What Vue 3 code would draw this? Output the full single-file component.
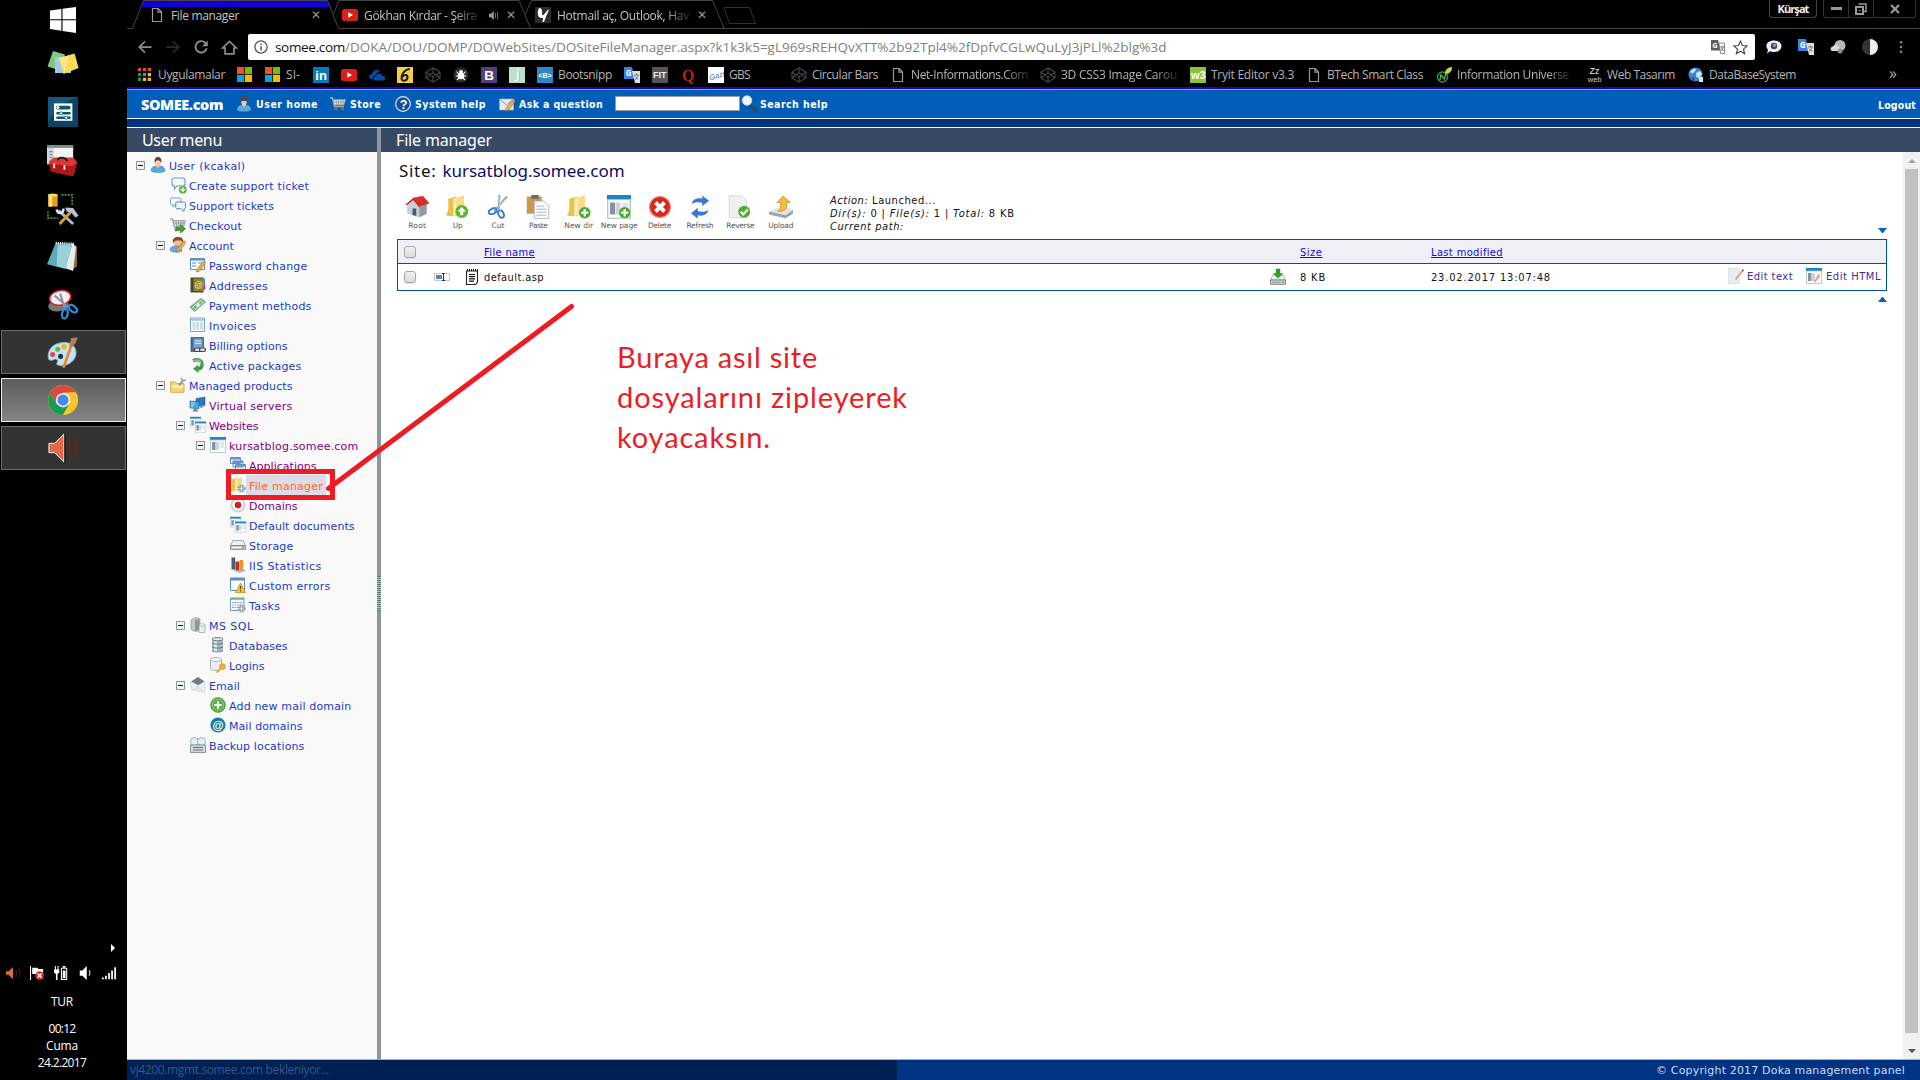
<script setup>
import { h } from 'vue'

/* Tunes letter-spacing so that a label takes the given width in pixels. */
const vFit = {
  mounted(el, { value }) {
    if (!value) return
    const natural = el.getBoundingClientRect().width
    el.style.letterSpacing = (value - natural) / el.textContent.length + 'px'
  },
}

const win = '<path fill="#1b86c4" d="M0 0h16v3H0z"/><path fill="#fff" stroke="#a9bccf" stroke-width=".8" d="M.5 3h15v12.5H.5z"/><path fill="#8293a6" d="M2 5h3.500v8H2z"/><path fill="#ccd3da" d="M6 5h3v8H6z"/><path fill="#e3e7eb" d="M10 5h4v6h-4z"/>'
const plus = '<circle cx="11.8" cy="11.8" r="4" fill="#45a82c" stroke="#d6efc9" stroke-width=".5"/><path stroke="#fff" stroke-width="1.5" d="M11.8 9.3v5M9.3 11.8h5"/>'
const folder = '<path fill="#e9c14d" d="M1.5 2.5 7 1v13H1.5L0 13.5l1.5-3z"/><path fill="#f8dd86" d="M5 2.5 12 0v12L5 14z"/><path fill="#fff0b5" d="m5 2.5 2-.7V13l-2 1z"/>'
const gear = '<circle cx="11.5" cy="11.5" r="3" fill="#eef1f4" stroke="#8f979e" stroke-width="2.2" stroke-dasharray="1.6 .8"/><circle cx="11.5" cy="11.5" r="1.4" fill="#fff" stroke="#8b9298" stroke-width=".8"/>'
const pencil = '<path fill="#f0ad42" stroke="#a96818" stroke-width=".6" d="m7 12.5 6-8 2.3 1.8-6 8L6.4 15z"/><path fill="#e9879a" d="m13 4.5 1-1.3 2.2 1.7-.9 1.4z"/>'
const person = '<path fill="#5aa7dc" stroke="#3b85bd" stroke-width=".5" d="M1 14c0-3 2-5 5-5h4c3 0 5 2 5 5-2 2-12 2-14 0z"/><path fill="#efc6a0" d="M5.2 5c0 3 1 5 2.8 6 1.8-1 2.8-3 2.8-6z"/><path fill="#6b3f2a" d="M4.8 6C4 1.5 6 0 8 0s4 1.5 3.2 6C10 4 9 3.5 7.5 3.5 6 3.5 5.5 5 4.8 6z"/>'
const cart = '<path fill="none" stroke="#aab0b5" stroke-width="1.3" d="M0 2h2.5l2 8.5H14"/><path fill="#e3e6e8" stroke="#8d9499" stroke-width=".8" d="M3 3.5h12.5L14 9H4.3z"/><path stroke="#83898e" stroke-width=".7" d="M6 3.5 6.6 9M8.5 3.5 8.8 9M11 3.5 11 9M13.4 3.5 12.8 9M3.5 6h11.3"/><circle cx="6" cy="13" r="1.4" fill="#777"/><circle cx="12.5" cy="13" r="1.4" fill="#777"/>'
const two = '<g transform="translate(0 -.2) scale(.68)">' + win + '</g><path fill="#f9f9f9" d="M4.500 3.800H16V16H4.500z"/><g transform="translate(5 4.500) scale(.7)">' + win + '</g>'
const gtr = (a, b) => `<path fill="${a}" d="M0 0h8l3 12H0z"/><path fill="${b}" d="M8 4h8v12h-5z"/><text x="1.8" y="8.6" font-size="8" font-weight="700" font-family="Open Sans,sans-serif" fill="#fff">G</text><path fill="none" stroke="#64707c" stroke-width=".9" d="M10 8h5M12.5 6.5V8m1.8 0c-.5 2-1.8 3.5-3.5 4.8M11.2 9.5l3 3.2"/>`
const yt = '<rect y="2" width="16" height="12" rx="2.5" fill="#d9201f"/><path fill="#fff" d="m6.3 5.2 4.7 2.8-4.7 2.8z"/>'
const codepen = '<g fill="none" stroke="#45484a" stroke-width="1.1"><path d="m8 .8 7 4.2v6l-7 4.2L1 11V5zM1 5l7 5 7-5M1 11l7-5 7 5M8 1v5M8 10v5"/></g>'
const page = '<path fill="none" stroke="#9a9a9a" stroke-width="1.2" d="M3.5 1.5h5.700l3.300 3.500v9.500h-9zM9 1.500v3.700h3.500"/>'
const ms = '<path fill="#f25022" d="M0 0h7.600v7.600H0z"/><path fill="#7fba00" d="M8.400 0H16v7.600H8.400z"/><path fill="#00a4ef" d="M0 8.400h7.600V16H0z"/><path fill="#ffb900" d="M8.400 8.400H16V16H8.400z"/>'
const txt = (bg, fg, t, s, x, y, extra = '') => `<path fill="${bg}" d="M0 0h16v16H0z"/><text x="${x}" y="${y}" font-size="${s}" fill="${fg}" font-family="Liberation Sans,sans-serif" ${extra}>${t}</text>`

const icons = {
  win, yt, codepen, page, ms, person, cart, websites: two,
  start: '<path fill="#fff" d="M0 2.200 7 1.200v6.300H0zM7.700 1.100 16 0v7.500H7.700zM0 8.200h7v6.400l-7-1zM7.700 8.200H16V16l-8.300-1.200z"/>',
  sticky: '<path fill="#7fc77a" d="m3 1.500 6 1.800-2.500 8L.3 9.200z"/><path fill="#9fcbf2" d="M4 4.500h8v8H4z"/><path fill="#f8dc56" d="m6 5 7.800-2.200 2 7.200L8.200 13z"/><path fill="#fff0a0" d="m6 5 5-1.400L9 12z" opacity=".6"/>',
  prefs: '<path fill="#0d4263" d="M0 0h16v16H0z"/><path fill="#17567b" d="M0 0h16C9 2 3 7 0 14z"/><path fill="#fff" d="M3.200 3.400h9.800v9.300H3.200z"/><g stroke="#0b5673" stroke-width="2" stroke-linecap="round"><path d="M5.200 5.600h5.800"/><path stroke-width="1.300" d="M5 8.700h6.500M5 11.100h6.500"/></g><circle cx="5.300" cy="5.600" r=".8" fill="#fff"/><circle cx="7" cy="8.700" r=".8" fill="#fff" stroke="#0b5673" stroke-width=".4"/><circle cx="9.700" cy="11.100" r=".8" fill="#fff" stroke="#0b5673" stroke-width=".4"/>',
  toolbox: '<path fill="#f3f3f3" d="M0 0h13.500v9H0z"/><path fill="#7d8894" d="M0 0h13.500v1.500H0z"/><path fill="#cfd6dc" d="M0 1.500h3.500V10H0z"/><path stroke="#6e7780" stroke-width=".5" d="M1 3.500h2M1.300 5h1.500M1.300 6.500h1.500"/><path fill="#df3833" d="m1 8.500 2.500-2h10L15.500 9l-2 7L2 13.500z"/><path fill="#b01716" d="m1 9.500 12 1.500 2.300-2L14 15l-2 1-10-2.400z"/><path fill="none" stroke="#222" stroke-width="1" d="M5.500 8C5.500 6 9.500 6 10.500 8.300"/><path fill="#ddd" d="M3.200 9.500h1v2.500h-1zM8.500 10.300h1v2.500h-1z"/>',
  dbtools: '<path fill="#e5a019" d="M.5 1h5v6h-5z"/><path fill="#fbe08d" d="M1 1h1.700v6H1z"/><ellipse cx="3" cy="1" rx="2.500" ry=".8" fill="#f9d873"/><path fill="none" stroke="#4f9440" stroke-width=".9" stroke-dasharray="1 .6" d="M7.500 1H13v5.500M.5 9.500V13h5"/><path stroke="#b0bccd" stroke-width="1.500" d="M6 9l7.500 7"/><path fill="none" stroke="#dfe6ef" stroke-width="1.300" d="M5 8.500c.5 2.500 3.500 2.500 3.500-.5"/><path stroke="#d99b33" stroke-width="1.500" d="M12.500 9.500 6.500 16"/><path fill="#b6c2d4" d="m9.500 7.500 4 .3 2.800 4-1.700.9-2-2.500-2.500-.7z"/>',
  notepad: '<path fill="#8d6a34" d="m13 2 2.500.8V13L13 15z"/><path fill="#e8edf0" d="m13 1 2 2-1.500 12.500-4-1.500z"/><path fill="#5fa9b8" d="M4.500 1 13 1.500 9.500 14.500 0 12z"/><path fill="#a9dae2" d="m5.500 2 7.300.2-3 12L5 13z" opacity=".8"/><path stroke="#eee" stroke-width="1.200" stroke-dasharray=".6 .5" d="M4.500 1 14 1.500"/>',
  snip: '<ellipse cx="5.500" cy="8.700" rx="5.500" ry="3.200" fill="#777" transform="rotate(-8 5.500 8.700)"/><ellipse cx="6.500" cy="4.700" rx="5.700" ry="3.900" fill="#f1f1f4" stroke="#d4232b" stroke-width=".8" transform="rotate(-12 6.500 4.700)"/><path stroke="#8c9299" stroke-width="1.100" d="m3.500 3.500 8 7M6.500 2.500l2.800 9"/><ellipse cx="9" cy="13.200" rx="1.500" ry="2.600" fill="none" stroke="#2b8fd8" stroke-width="1.200" transform="rotate(12 9 13.200)"/><ellipse cx="13.300" cy="10.500" rx="1.500" ry="2.600" fill="none" stroke="#2b8fd8" stroke-width="1.200" transform="rotate(-50 13.300 10.500)"/>',
  paint: '<path fill="#c5e2f5" stroke="#7fb1d6" stroke-width=".5" d="M9 2.800c4 0 6 2.500 6 5.500 0 3.500-3.500 6.500-7.500 6.500-.9 0-2.500-.3-2.500-.9s1-1.600.2-2.300c-1.200-.9-2.500 1-3.900.3C-.3 10.500.3 3 9 2.800z"/><circle cx="7" cy="10" r="1.300" fill="#1d3444"/><circle cx="2.900" cy="9" r="1.300" fill="#e3483d"/><circle cx="5.500" cy="6.300" r="1.300" fill="#57b847"/><circle cx="8.800" cy="5" r="1.400" fill="#f6b81c"/><path stroke="#e98a2a" stroke-width="1.400" stroke-linecap="round" d="M8.700 15.300 12.500 4.500"/><path fill="#b48252" d="m11.500 4.500 1-4L16 .2 14.800 3l-1.700 2.200z"/>',
  chrome: '<circle cx="8" cy="8" r="8" fill="#fbc52d"/><path fill="#dc4a3d" d="M1.100 4A8 8 0 0 1 14.900 4H8L4.500 10z"/><path fill="#179c57" d="M1.100 4A8 8 0 0 0 8 16l3.500-6-3.500 2-3.500-2z"/><path fill="#fbc52d" d="M14.900 4A8 8 0 0 1 8 16l3.500-6V4z"/><circle cx="8" cy="8" r="3.800" fill="#fff"/><circle cx="8" cy="8" r="3" fill="#4587f3"/>',
  horn: '<path fill="#e0694a" stroke="#fff" stroke-width=".5" d="M.5 5.500h3L8.500.500v15l-5-5h-3z"/><path fill="none" stroke="#000" stroke-width=".5" d="M9 0v16"/><path fill="none" stroke="#6b2514" stroke-width=".9" d="M11 4.500c1.500 2 1.500 5 0 7M13.500 2c2.700 3.500 2.700 8.500 0 12"/>',
  hornS: '<path fill="#e0694a" d="M0 6h3l5-5v14l-5-5H0z"/><path fill="none" stroke="#57200f" stroke-width="1" d="M11 4.500c1.500 2 1.500 5 0 7M14 2c2.500 3.500 2.500 8.500 0 12"/>',
  flag: '<path fill="#fff" d="M0 0h1.200v16H0zM2.500 2h6l1 1.500H15V9H2.500z"/><circle cx="11" cy="11" r="5" fill="#d3291c"/><path stroke="#fff" stroke-width="1.600" d="m8.700 8.700 4.600 4.600M13.300 8.700l-4.600 4.600"/>',
  battery: '<path fill="none" stroke="#fff" stroke-width="1.200" d="M8.500 2.500h6v13h-6z"/><path fill="#fff" d="M10 5h3.200v9H10zM10 0h3v2h-3zM0 4h6v3.500L4 9v7H2.200V9L0 7.500zM1 0h1.200v4H1zM4 0h1.200v4H4z"/>',
  vol: '<path fill="#fff" d="M2 5h3l5-5v16l-5-5H2z"/><path fill="none" stroke="#ddd" stroke-width="1.200" d="M12.500 5c1.500 1.500 1.500 4.500 0 6"/>',
  signal: '<path fill="#fff" d="M0 13h2v2H0zM3.500 11h2v4h-2zM7 8h2v7H7zM10.500 5h2v10h-2zM14 1.500h2V15h-2z"/>',
  back: '<path fill="none" stroke="#8c8c8c" stroke-width="2" d="M15.500 8H2M8 1.500 1.500 8 8 14.500"/>',
  fwd: '<path fill="none" stroke="#2b2b2b" stroke-width="2" d="M.5 8H14M8 1.500 14.500 8 8 14.500"/>',
  reload: '<path fill="none" stroke="#8c8c8c" stroke-width="2.200" d="M13.500 4A6.500 6.500 0 1 0 14.500 9.500"/><path fill="#8c8c8c" d="M15.800.500v6.700H9z"/>',
  home: '<path fill="none" stroke="#8c8c8c" stroke-width="1.800" d="M.8 8.500 8 1.500l7.200 7h-2.500v6.300H3.300V8.500z"/>',
  info: '<circle cx="8" cy="8" r="7" fill="none" stroke="#555" stroke-width="1.500"/><path stroke="#555" stroke-width="1.700" d="M8 7v5M8 4v1.700"/>',
  star: '<path fill="none" stroke="#4c4c4c" stroke-width="1.300" d="m8 1.200 2 4.700 5 .4-3.800 3.400 1.200 5L8 12l-4.400 2.700 1.200-5L1 6.300l5-.4z"/>',
  gtrG: '<path fill="#5c5c5c" d="M0 0h8l3 12H0z"/><path fill="#fff" stroke="#777" stroke-width="1" d="M9 3.500h6.500v12H11z"/><text x="1.500" y="9" font-size="8.500" font-weight="700" font-family="Open Sans,sans-serif" fill="#fff">G</text><path fill="none" stroke="#666" stroke-width="1" d="M10.500 8h4.500M12.500 6.500V8m1.800 0c-.5 2-1.800 3.500-3 4.500M11.500 9.500l3 3.200"/>',
  gtrB: gtr('#3f7fe8', '#dbe0e4'),
  bubble: '<path fill="#f2f2f5" d="M8 1.500c4 0 7.500 2.300 7.500 5.700S12 13 8 13c-1.500 0-3-.3-4-.8L1 14.500l1-3.800C-2 6 2 1.500 8 1.500z"/><circle cx="8" cy="7" r="3.200" fill="#34456f"/><circle cx="8.500" cy="6.300" r="1.700" fill="#b98e8b"/>',
  weather: '<circle cx="10" cy="6.500" r="5.500" fill="#b9b9b9"/><path fill="#d9d9d9" d="M2 12c-2-1-2-4 1-4.500C4 5 8 5 8.500 8c3 0 3 4 0 4z"/><circle cx="10" cy="12" r="2.500" fill="#8d8d8d"/>',
  half: '<path fill="#333" d="M8 0a8 8 0 0 0 0 16z"/><path fill="#eee" d="M8 0a8 8 0 0 1 0 16z"/>',
  dots: '<circle cx="8" cy="2.500" r="1.500" fill="#858585"/><circle cx="8" cy="8" r="1.500" fill="#858585"/><circle cx="8" cy="13.500" r="1.500" fill="#858585"/>',
  apps: '<path fill="#dd4b3e" d="M0 0h4v4H0zM6 0h4v4H6zM12 0h4v4h-4z"/><path fill="#1a9b5a" d="M0 6h4v4H0zM0 12h4v4H0z"/><path fill="#4285f4" d="M6 6h4v4H6z"/><path fill="#f4b91c" d="M12 6h4v4h-4zM6 12h4v4H6zM12 12h4v4h-4z"/>',
  inn: txt('#0b78b5', '#fff', 'in', 13, 2.3, 12.7, 'font-weight="700"'),
  drive: '<path fill="#0b4ba3" d="M2 12c-3-1-2-5 1-5 1-4 6-5.500 8.500-2.500-3 0-4.500 2-5 4-2 0-3 1.500-2.500 3.500z"/><path fill="#0b4ba3" d="M6 13.500c-2.500-.5-2-4 .6-4 .5-4 6-4 6.700-.8 3.700 0 3.700 4.500.7 4.800z"/>',
  six: '<path fill="#f6cf46" d="M0 0h16v16H0z"/><path fill="none" stroke="#1d1d1d" stroke-width="2" stroke-linecap="round" d="M12 2C7.500 2.500 4 8 4.500 11.500c.6 3.500 5.500 2.500 6-1 .3-3-3.500-3.500-5.300-.5"/>',
  bug: '<circle cx="8" cy="8" r="7.500" fill="#2b2c2d"/><circle cx="8" cy="9" r="3.300" fill="#fff"/><circle cx="8" cy="5" r="2" fill="#fff"/><path stroke="#fff" stroke-width="1.100" d="M3.500 4.500 6 7.500M12.500 4.500 10 7.500M2.800 9h10.400M4 13l3-3M12 13l-3-3"/>',
  bb: txt('#563d7c', '#fff', 'B', 13.5, 3.2, 12.8, 'font-weight="700"'),
  jj: '<path fill="#bfe0cc" d="M0 0h16v16H0z"/><path fill="none" stroke="#fff" stroke-width="1.600" d="M9 4.500v7.500c0 2-1.500 2.500-3.500 2M9 1.500v1.500"/><path fill="none" stroke="#79a98c" stroke-width=".5" d="M10.200 4.500V12c0 2.500-2 3.500-4.500 3"/>',
  snipp: txt('#2f87c5', '#fff', '&lt;B&gt;', 7, 1.3, 10.500, 'font-weight="700"'),
  fit: txt('#555', '#eee', 'FIT', 9, .9, 11.400, 'font-weight="700"'),
  qq: '<text x="2" y="13.500" font-size="16" font-weight="700" font-family="Liberation Serif,serif" fill="#b7260f">Q</text>',
  gazi: txt('#fff', '#3b6fb5', 'Gazi', 7.5, .8, 11.5, 'font-style="italic" transform="rotate(-18 8 8)"'),
  w3: txt('#8ac43f', '#fff', 'w3', 11, .9, 12, 'font-weight="700"'),
  leaf: '<circle cx="6.500" cy="10" r="5" fill="none" stroke="#2a9b3b" stroke-width="1.500"/><path fill="none" stroke="#4fc04a" stroke-width="1.300" d="m4 13 .8-5 3.500 4L10 6"/><path fill="#c6dc3d" d="M9 7c0-4 2-6.500 7-7 0 4-2 7-7 7z"/>',
  zz: '<text x="2.500" y="7" font-size="9" font-family="Liberation Sans,sans-serif" fill="#eee">Zz</text><text x=".8" y="15.300" font-size="7.500" font-family="Liberation Sans,sans-serif" fill="#ccc">web</text>',
  globe: '<circle cx="7.500" cy="7.500" r="7" fill="#3e87cf"/><path fill="#cfe6f7" d="M2 5c2-3 4-3.500 6-3l-1.500 3L4 6.500zM8 6l4-2 2 3-3 4-2.500-1z"/><path fill="#1d5a9e" d="M3 10l3 0 1 4c-2 0-3.500-2-4-4z"/><path fill="#e2e8ee" d="M11 10h4v5h-4z"/>',
  hot: '<path fill="#2b2d31" d="M0 0h16v16H0z"/><path fill="#fff" d="M4.500 1c2.500 0 3 3 2.500 6.500 1 1 1.500 1 2 0L13 2.500l.8 1L11 9.500 9 15H7.500L8 11c-3 0-4.500-.5-5-3-.5-3 0-6.500 1.500-7z"/>',
  sound: '<path fill="#999" d="M0 5.500h3l4-4v13l-4-4H0z"/><path fill="none" stroke="#777" stroke-width="1.300" d="M9.500 4v8M12.500 2.500v11"/>',
  help: '<circle cx="8" cy="8" r="7.300" fill="#134e9b" stroke="#dce8f6" stroke-width="1.200"/><text x="4.700" y="12.500" font-size="12.500" font-weight="700" font-family="Liberation Sans,sans-serif" fill="#fff">?</text>',
  ask: '<path fill="#e6edf5" stroke="#9eb4cc" stroke-width=".6" d="M.5 3h14v11H.5z"/><path fill="none" stroke="#8095ae" d="m.5 3 7 6 7-6"/>' + pencil,
  search: '<path stroke="#3a4450" stroke-width="2.200" stroke-linecap="round" d="m8.500 9.500 6.500 6.300"/><circle cx="5" cy="4.500" r="4.800" fill="#eef4fb" stroke="#ccd5de" stroke-width=".8"/>',
  chatAdd: '<path fill="#f4f8fc" stroke="#6f96c4" stroke-width="1.100" d="M4 1h9c1.500 0 2 1 2 2v4c0 1.500-1 2-2 2H7l-2.500 3V9C3 9 2 8 2 7V3c0-1 .8-2 2-2z"/><g transform="translate(1 1)">' + plus + '</g>',
  chats: '<path fill="#f4f8fc" stroke="#7b9dc8" stroke-width="1" d="M1.500 1h8c1 0 1.300.6 1.300 1.300v4c0 1-.6 1.400-1.300 1.400H5L3 10V7.700H1.500C.8 7.700.5 7 .5 6.500v-4C.5 1.500.8 1 1.500 1z"/><path fill="#eaf2fa" stroke="#5d87bb" stroke-width="1" d="M7 5h7c1 0 1.500.6 1.500 1.300v4c0 1-.6 1.400-1.300 1.400L14 14.500l-3-2.800H7c-1 0-1.300-.6-1.300-1.400v-4C5.700 5.500 6.300 5 7 5z"/>',
  checkout: cart + '<path fill="#4f9d35" stroke="#2e7519" stroke-width=".6" d="M6 10h4.500V7.500l5 4.300-5 4.200v-2.500H6z"/>',
  account: '<circle cx="8" cy="5.500" r="4.500" fill="#f0c08f"/><path fill="#8a4b1e" d="M3 6C2 1 5 0 8 0s6 1 5 6l-2-2.500H5.500z"/><path fill="#6fa4df" stroke="#3d74b5" stroke-width=".5" d="M0 13c0-2.500 2-4 5-4h5l2 5c-4 2-11 1.500-12-1z"/>' + pencil,
  password: '<path fill="#f7fafd" stroke="#5f8fc5" d="M.5 1.500h14v11H.5z"/><path fill="#5f8fc5" d="M.5 1.500h14v2H.5zM2 5.500h4v1H2zM2 8.500h4v1H2zM8 5.500h5v1H8z"/>' + pencil,
  book: '<path fill="#4c4a26" d="M.5.500h13v15H.5z"/><path fill="#8c8230" d="M3.500 1.500h9.500v12.500H3.500z"/><text x="4.300" y="11" font-size="8.500" font-family="Liberation Sans,sans-serif" fill="#f0e6a8">@</text><path fill="#159ad6" d="M13.500 1.500H15v5h-1.500z"/><path fill="#e51f8b" d="M13.500 6.500H15V13h-1.500z"/>',
  money: '<path fill="#7bb98a" stroke="#4d9461" stroke-width=".7" d="m0 10 11-8.500L15.500 5 4.500 14.500z"/><path fill="none" stroke="#d5ecd9" stroke-width=".8" d="m2.500 10 8.500-6.500 2.500 1.800-8.500 7.200z"/><circle cx="8" cy="8" r="2" fill="#d5ecd9"/>',
  invoice: '<path fill="#fff" stroke="#7a9fd2" d="M.5 1h14v13.500H.5z"/><path fill="#a9c3e6" d="M1 1.500h13v2.300H1z"/><path stroke="#8fb0db" stroke-width=".9" d="M2.500 6h10.500M2.500 8h10.500M2.500 10h10.500M2.500 12h10.500"/><path stroke="#fff" d="M5.500 5v8M9.500 5v8"/>',
  billing: '<path fill="#3f6da0" stroke="#274d78" stroke-width=".7" d="M1 .5h12.500v14H1z"/><path fill="#7ea4cc" d="M3.500 1.500h9v10h-9z"/><path stroke="#dbe7f3" d="M5 4h6M5 6.500h6"/><g fill="#ddd" stroke="#444" stroke-width="1.200"><rect x="4.500" y="11" width="6" height="3.500" rx="1.700"/><rect x="9.500" y="11" width="6" height="3.500" rx="1.700"/></g>',
  recycle: '<path fill="none" stroke="#429a4a" stroke-width="3.400" d="M3 3.700C7 1.700 12 3 12 7.500c0 3-2 4.500-4.500 4.500"/><path fill="#429a4a" d="M8.500 7.500V16L3 11.700z"/><path fill="none" stroke="#a2d5a2" stroke-width="1.200" d="M3.500 3.700c3.500-1.500 7.500-.5 7.700 3.500"/>',
  managed: '<path fill="#f7d577" stroke="#d3a02e" stroke-width=".8" d="M.5 5h5l1 1.500h7.500v8.800H.5z"/><path fill="#fdf4d3" d="M2 8.500h11v2H2z"/><path stroke="#8b949b" stroke-width="2" d="m9 8.500 4-5"/><path fill="none" stroke="#8b949b" stroke-width="1.500" d="M11.500.800c-.5 2 1.500 3.500 4 2.200"/>',
  servers: '<path fill="#2b7ab9" stroke="#1b588c" stroke-width=".5" d="m6 1.500 9-1.500v8.500l-9 .5z"/><path fill="#4da2dd" stroke="#1b588c" stroke-width=".6" d="m0 4 9 .800v7L0 11z"/><path fill="#82c4ee" d="m1 5 4 .300L3 10.500l-2-.2z"/><path fill="#777f87" d="M4 12h2.500l2 2.500H2.500zM10 9h2l2 1.500h-4z"/>',
  applications: '<g fill="#e7eff8" stroke="#5884bd" stroke-width=".9"><path d="M.5.500h10v6H.5zM3 4h10v6H3zM5.500 7.500h10v6h-10z"/></g><path fill="#6793ca" d="M.5.500h10v2H.5zM3 4h10v2H3zM5.500 7.500h10v2h-10z"/>',
  fileman: folder + gear,
  domain: '<circle cx="8" cy="8" r="7.500" fill="#ccd4db"/><circle cx="8" cy="8" r="5.500" fill="#f3f5f7"/><circle cx="8" cy="8" r="3.200" fill="#c8261b"/>',
  storage: '<path fill="#eceeef" stroke="#83888c" stroke-width=".7" d="M3 3.500h10l2.500 5h-15z"/><path fill="#c3c7ca" stroke="#75797c" stroke-width=".7" d="M.5 8.500h15v4H.5z"/><path stroke="#fff" d="M2 10.500h9"/><circle cx="13.300" cy="10.500" r=".9" fill="#45b53a"/>',
  stats: '<path fill="#3f617c" d="M1.500.500h3.700v12H1.500z"/><path fill="#c52b1c" d="M5.500 4.500h3.700V14H5.500z"/><path fill="#ec9430" d="M9.500 3h3.700v11H9.500z"/><path fill="#adb5bc" d="m0 12 5 1.500 10-1 .5 1.500-6 2z"/>',
  errors: '<path fill="#fafcff" stroke="#5d8bc9" d="M.5 1h14v12.500H.5z"/><path fill="#5d8bc9" d="M.5 1h14v2.500H.5z"/><path fill="#f7c638" stroke="#b98212" stroke-width=".7" d="m10.500 6 5 9.500h-10z"/><path stroke="#5c3c00" stroke-width="1.200" d="M10.500 9v3.300M10.500 13.200v1.200"/>',
  tasks: '<path fill="#fff" stroke="#6b97cb" d="M.5 1h13.500v12.500H.5z"/><path fill="#83b07d" d="M.5 1h13.500v1.800H.5z"/><path stroke="#7ba2d2" stroke-width="1" stroke-dasharray="1.800 .7" d="M2 5.500h10.500M2 8h10.500M2 10.500h10.500"/>' + gear,
  mssql: '<path fill="#c4c8cb" stroke="#898e92" stroke-width=".6" d="m1 3 4-2.500 5 1v12l-5 1-4-2z"/><path fill="#8f9598" d="m5 3 4.500-.8v10.500L5 14z"/><path stroke="#5cbf51" stroke-width="1.200" d="M6.500 6.500h2"/><path fill="#eceeef" stroke="#8b9094" stroke-width=".6" d="M9 8h6v7.500H9z"/><ellipse cx="12" cy="8" rx="3" ry="1.200" fill="#fff" stroke="#8b9094" stroke-width=".6"/>',
  db: '<path fill="#a9b8c1" d="M2 2h11v12H2z"/><path fill="#e4ebee" d="M4 2h3v12H4z"/><g stroke="#566c79" stroke-width=".9"><ellipse cx="7.500" cy="2.200" rx="5.500" ry="1.700" fill="#dce5e9"/><path fill="none" d="M2 6c2 1.500 9 1.500 11 0M2 10c2 1.500 9 1.500 11 0M2 13.700c2 1.600 9 1.600 11 0"/></g>',
  logins: '<path fill="#eceeef" stroke="#92989c" stroke-width=".7" d="M.5 2.500v9.500c2 2 9 2 11 0V2.500z"/><ellipse cx="6" cy="2.500" rx="5.500" ry="2" fill="#fafafa" stroke="#92989c" stroke-width=".7"/><circle cx="12.500" cy="9.500" r="2.800" fill="#f2b343" stroke="#b8791b" stroke-width=".6"/><path stroke="#eaa52f" stroke-width="2" d="m10.800 11.500-4 4"/>',
  email: '<path fill="#717a81" d="m8 0 6.500 4.500-6 4L1 4.500z"/><path fill="#eef0f2" stroke="#c3c8cc" stroke-width=".6" d="m.5 4.500 7.500 4 7-4-.5 10.500L1.500 13z"/><path fill="#dfe3e6" d="m8 8.500 6.500 6.500L1.500 13z"/>',
  addG: '<circle cx="8" cy="8" r="7.300" fill="#56ae44" stroke="#37872a" stroke-width=".8"/><circle cx="8" cy="8" r="5.800" fill="none" stroke="#b5dfa9" stroke-width=".6"/><path stroke="#fff" stroke-width="2.200" d="M8 4.300v7.400M4.300 8h7.400"/>',
  at: '<circle cx="8" cy="8" r="7.600" fill="#12809f"/><text x="2.300" y="12" font-size="11.500" font-style="italic" font-weight="700" font-family="Liberation Sans,sans-serif" fill="#fff">@</text>',
  backup: '<g fill="#e4f0f6" stroke="#7fa9c0" stroke-width=".8"><circle cx="4.500" cy="4.500" r="4"/><circle cx="11.500" cy="4.500" r="4"/></g><path fill="#d4d7d9" stroke="#6d7276" stroke-width=".7" d="M.5 8h15v7.500H.5z"/><path stroke="#6d7276" stroke-width="1.200" d="M3 10.500h10M3 13h10"/>',
  root: '<path fill="#c8ced4" d="m1.500 7 4-4 4 5v7l-8-2.500z"/><path fill="#8f9aa6" d="m9.500 8 5-2v6.500l-5 2.500z"/><path fill="#d92d25" stroke="#a31812" stroke-width=".3" d="M5.500 2 12 .800l4 4.700-6 2z"/><path fill="#b3221b" d="M5.500 2 .3 6.500l1 .4L5.500 3.300l4 5 .6-.8z"/><path fill="#4d5b69" d="M5 9h2.500v5L5 13.300z"/>',
  up: folder + '<circle cx="10.500" cy="11" r="4.300" fill="#58b92a"/><path fill="#fff" d="m10.500 8 2.800 3h-1.800v2.500h-2V11H7.700z"/>',
  cut: '<path stroke="#8d9dac" stroke-width="1.300" d="m9 0-.5 9.500M14 1 5.500 11"/><path stroke="#dfe6ec" stroke-width=".5" d="m9.300 1-.4 7M13.500 2.200 6 10.500"/><ellipse cx="4.500" cy="10.800" rx="2.800" ry="1.700" fill="none" stroke="#3f7ed4" stroke-width="1.300" transform="rotate(-25 4.500 10.800)"/><ellipse cx="10" cy="12.700" rx="1.700" ry="2.600" fill="none" stroke="#3f7ed4" stroke-width="1.300" transform="rotate(-25 10 12.700)"/>',
  paste: '<path fill="#c99a4c" d="M.5 1h10v11.500H.5z"/><path fill="#6b6b6b" d="M3.500 0h5v2.500h-5z"/><path fill="#f7f9fb" stroke="#a3abb3" stroke-width=".5" d="M5.500 4h6.500l3.200 3v8.700H5.500z"/><path stroke="#a9b8c8" stroke-width=".6" d="M7 7.500h5M7 9.500h6.500M7 11.500h6.500M7 13.500h6.500"/>',
  newdir: folder + plus, newpage: win + plus,
  del: '<circle cx="8" cy="8" r="7" fill="#d8281c" stroke="#e98c83" stroke-width=".8"/><path stroke="#fff" stroke-width="2.600" d="m5 5 6 6M11 5l-6 6"/>',
  refresh: '<path fill="#3c78d2" d="M2.500 6C3 3 6 1.500 9.500 2.500V.300L14 3.800 9.500 7.500V5.300C7 4.500 4.500 4.700 2.500 6z"/><path fill="#3c78d2" d="M13.500 10c-.5 3-3.500 4.500-7 3.500v2.300L2 12.200l4.500-3.700v2.200c2.500.8 5 .6 7-.7z"/>',
  reverse: '<path fill="#eef0f2" stroke="#ccd0d3" stroke-width=".5" d="M.800.500h8.500l3 3v11.500H.800z"/><circle cx="10.800" cy="11.200" r="4" fill="#4cae31"/><path fill="none" stroke="#fff" stroke-width="1.400" d="m8.500 11.200 1.700 1.800 3-3.300"/>',
  upload: '<path fill="#e0e3e6" d="m0 11 5-2.500h8l3 1.700-5 3.300z"/><path fill="#9aa1a7" d="m0 11 11 2.500v2L0 13zM11 13.500l5-3.300v2.300l-5 3z"/><path fill="#f4bb42" stroke="#c98c1b" stroke-width=".5" d="m9.500.700 4.700 4.300h-2.500v3.500c-1 2-3 2.500-6 2.300 1.500-.5 2-1.500 2-3V5H5.300z"/>',
  rename: '<path fill="#fff" stroke="#c0c0c0" stroke-width=".9" d="M.500 4.500h15v7H.5z"/><path fill="#5b82c4" d="M2 6h6v4H2z"/><path fill="none" stroke="#333" stroke-width="1" d="M8 4.500h3M8 11.500h3M9.500 4.500v7"/>',
  doc: '<path fill="#fff" stroke="#222" stroke-width="1.100" d="M2.500 2h11v11l-2 2.500h-9z"/><path stroke="#111" stroke-width="2" stroke-dasharray="1 1" d="M3 1h11"/><path stroke="#111" stroke-width="1.200" d="M5 5.500h6M5 7.700h6M5 9.900h6M5 12.100h5"/>',
  download: '<path fill="#eef0f1" stroke="#9a9fa3" stroke-width=".7" d="M3 6h10l2.500 5H.5z"/><path fill="#d5d8da" stroke="#666b6f" stroke-width=".8" d="M.5 11h15v4.300H.5z"/><path stroke="#777" stroke-width=".8" d="M2 13.200h9"/><circle cx="13" cy="13.200" r=".9" fill="#3db42e"/><path fill="#2fa32a" stroke="#197316" stroke-width=".4" d="M6 0h4v4.500h2.700L8 9.300 3.300 4.500H6z"/>',
  etext: '<path fill="#eaedef" stroke="#d3d7da" stroke-width=".6" d="M.5.500h11v15H.5z"/><path stroke="#e59b6a" stroke-width="1.800" d="m7.500 11.500 6.500-8"/><path stroke="#b5476b" stroke-width="1.800" d="m14 3.500 1.500-1.900"/>',
  ehtml: win + '<path stroke="#e59b6a" stroke-width="1.800" d="m8.500 14 5-7"/>',
}
const Ico = ({ n, s = 16 }) => h('svg', { width: s, height: s, viewBox: '0 0 16 16', innerHTML: icons[n], style: { flex: 'none', display: 'block', overflow: 'visible' } })
Ico.props = ['n', 's']

const pinned = [['sticky', 32], ['prefs', 30], ['toolbox', 31], ['dbtools', 31], ['notepad', 31], ['snip', 30]]
const running = [['paint', 31, ''], ['chrome', 30, 'active'], ['horn', 30, '']]

/* x is where a bookmark starts, tx where its label starts, w how wide the label is. */
const bookmarks = [
  { i: 'apps', s: 13, x: 138, tx: 158, t: 'Uygulamalar', w: 67 }, { i: 'ms', s: 15, x: 237 },
  { i: 'ms', s: 15, x: 265, tx: 286, t: 'SI-', w: 14 }, { i: 'inn', x: 313 }, { i: 'yt', x: 341 }, { i: 'drive', x: 369 },
  { i: 'six', x: 397 }, { i: 'codepen', x: 425 }, { i: 'bug', x: 453 }, { i: 'bb', x: 481 }, { i: 'jj', x: 509 },
  { i: 'snipp', x: 537, tx: 558, t: 'Bootsnipp', w: 54 }, { i: 'gtrB', x: 624 }, { i: 'fit', x: 652 }, { i: 'qq', x: 680 },
  { i: 'gazi', x: 708, tx: 729, t: 'GBS', w: 21 }, { i: 'codepen', x: 791, tx: 812, t: 'Circular Bars', w: 66 },
  { i: 'page', x: 890, tx: 911, t: 'Net-Informations.Com', w: 117, fade: 1 },
  { i: 'codepen', x: 1040, tx: 1061, t: '3D CSS3 Image Carou', w: 116, fade: 1 },
  { i: 'w3', x: 1190, tx: 1211, t: 'Tryit Editor v3.3', w: 83 }, { i: 'page', x: 1306, tx: 1327, t: 'BTech Smart Class', w: 96 },
  { i: 'leaf', x: 1436, tx: 1457, t: 'Information Universe', w: 112, fade: 1 },
  { i: 'zz', x: 1587, tx: 1607, t: 'Web Tasarım', w: 68 }, { i: 'globe', x: 1688, tx: 1709, t: 'DataBaseSystem', w: 87 },
  { x: 1889 },
]
const slot = (b, k) => ({ width: bookmarks[k + 1].x - b.x + 'px' })

const tree = [
  [0, 1, 'person', 'User (kcakal)', 76.5], [1, 0, 'chatAdd', 'Create support ticket', 120], [1, 0, 'chats', 'Support tickets', 85],
  [1, 0, 'checkout', 'Checkout', 53], [1, 1, 'account', 'Account', 45], [2, 0, 'password', 'Password change', 98.5],
  [2, 0, 'book', 'Addresses', 59], [2, 0, 'money', 'Payment methods', 102.5], [2, 0, 'invoice', 'Invoices', 47.5],
  [2, 0, 'billing', 'Billing options', 78.5], [2, 0, 'recycle', 'Active packages', 92.5], [1, 1, 'managed', 'Managed products', 103.5],
  [2, 0, 'servers', 'Virtual servers', 83.5, 'seen'], [2, 1, 'websites', 'Websites', 49.5, 'seen'],
  [3, 1, 'win', 'kursatblog.somee.com', 129.5, 'seen'], [4, 0, 'applications', 'Applications', 67.5, 'seen'],
  [4, 0, 'fileman', 'File manager', 74, 'current'], [4, 0, 'domain', 'Domains', 48.5, 'seen'],
  [4, 0, 'websites', 'Default documents', 105.5], [4, 0, 'storage', 'Storage', 44.5], [4, 0, 'stats', 'IIS Statistics', 72.5],
  [4, 0, 'errors', 'Custom errors', 81.5], [4, 0, 'tasks', 'Tasks', 31.5], [2, 1, 'mssql', 'MS SQL', 44.5],
  [3, 0, 'db', 'Databases', 58.5], [3, 0, 'logins', 'Logins', 35.5], [2, 1, 'email', 'Email', 31],
  [3, 0, 'addG', 'Add new mail domain', 122.5], [3, 0, 'at', 'Mail domains', 73.5], [2, 0, 'backup', 'Backup locations', 95.5],
]
const tools = [['root', 'Root', 18], ['up', 'Up', 9.5], ['cut', 'Cut', 13], ['paste', 'Paste', 18.5], ['newdir', 'New dir', 29],
  ['newpage', 'New page', 37], ['del', 'Delete', 23], ['refresh', 'Refresh', 27], ['reverse', 'Reverse', 28], ['upload', 'Upload', 25]]
</script>

<template>
  <div class="screen">
    <aside class="taskbar">
      <div class="start"><Ico n="start" :s="26" /></div>
      <div v-for="[n, s] in pinned" :key="n" class="cell"><Ico :n="n" :s="s" /></div>
      <div v-for="[n, s, c] in running" :key="n" class="cell task" :class="c"><Ico :n="n" :s="s" /></div>
      <div class="more"></div>
      <div class="tray">
        <Ico n="hornS" :s="14" /><Ico n="flag" :s="14" /><Ico n="battery" :s="14" /><Ico n="vol" :s="14" /><Ico n="signal" :s="14" />
      </div>
      <div class="lang"><span v-fit="22">TUR</span></div>
      <div class="clock"><span v-fit="27">00:12</span><span v-fit="32">Cuma</span><span v-fit="48.5">24.2.2017</span></div>
    </aside>

    <div class="browser">
      <div class="tabs">
        <svg class="tabshape" width="1793" height="29">
          <path d="M17 0H201L203.500 7H14.500z" fill="#1400d2" />
          <g fill="none" stroke="#444" stroke-width="1">
            <path d="M0 28.500h5.500L16.500.500M200.500.500 211.500 28.500H1793" />
            <path d="M16.500.500h184M206.500 14 212 .500h180L403.500 28M398.500 14 404.500.500H585.500L597 28" />
            <path d="M597 7.500h25.500l6 16h-26z" stroke="#333" />
          </g>
        </svg>
        <div class="tab t1"><Ico n="page" /><span v-fit="68">File manager</span><i>✕</i></div>
        <div class="tab t2"><Ico n="yt" /><span v-fit="113" class="fade">Gökhan Kırdar - Şeirə</span><Ico n="sound" :s="11" class="snd" /><i>✕</i></div>
        <div class="tab t3"><Ico n="hot" /><span v-fit="132" class="fade">Hotmail aç, Outlook, Hav</span><i>✕</i></div>
        <div class="profile"><span v-fit="31">Kürşat</span></div>
        <div class="winbtns">
          <b><svg width="11" height="4"><path d="M0 0h11v3H0z" fill="#999" /></svg></b>
          <b><svg width="12" height="12" fill="none" stroke="#999"><path d="M3.500 1h7.500v7.500H9" stroke-width="1.500" /><path d="M1 4h7v7H1z" stroke-width="2" /><path d="M3.500 7.500h2" /></svg></b>
          <b class="wide"><svg width="10" height="10" stroke="#999" stroke-width="2.200"><path d="m1 1 8 8M9 1 1 9" /></svg></b>
        </div>
      </div>

      <div class="toolbar">
        <Ico n="back" :s="14" /><Ico n="fwd" :s="14" /><Ico n="reload" :s="14" /><Ico n="home" :s="15" />
        <div class="url">
          <Ico n="info" :s="14" />
          <span class="host" v-fit="70">somee.com</span><span class="path" v-fit="821.5">/DOKA/DOU/DOMP/DOWebSites/DOSiteFileManager.aspx?k1k3k5=gL969sREHQvXTT%2b92Tpl4%2fDpfvCGLwQuLyJ3jPLl%2blg%3d</span>
          <div class="urlicons"><Ico n="gtrG" :s="14" /><Ico n="star" :s="15" /></div>
        </div>
        <div class="exts"><Ico n="bubble" /><Ico n="gtrB" /><Ico n="weather" /><Ico n="half" /><Ico n="dots" :s="14" /></div>
      </div>

      <div class="bookmarks">
        <div v-for="(b, k) in bookmarks.slice(0, -1)" :key="b.x" class="bm" :style="slot(b, k)">
          <span v-if="b.t" class="bmi" :style="{ width: b.tx - b.x + 'px' }"><Ico :n="b.i" :s="b.s || 16" /></span>
          <Ico v-else :n="b.i" :s="b.s || 16" />
          <span v-if="b.t" v-fit="b.w" class="lbl" :class="{ fade: b.fade }">{{ b.t }}</span>
        </div>
        <span class="chev">»</span>
      </div>

      <header class="site">
        <strong class="brand" v-fit="82">SOMEE.com</strong>
        <a class="l1"><Ico n="person" /><span v-fit="62">User home</span></a>
        <a class="l2"><Ico n="cart" /><span v-fit="31">Store</span></a>
        <a class="l3"><Ico n="help" /><span v-fit="71">System help</span></a>
        <a class="l4"><Ico n="ask" /><span v-fit="84">Ask a question</span></a>
        <div class="field"></div>
        <a class="l5"><Ico n="search" /><span v-fit="68">Search help</span></a>
        <a class="out"><span v-fit="38">Logout</span></a>
      </header>
      <div class="strip"></div>

      <div class="panes">
        <nav class="menu">
          <h2><span v-fit="80">User menu</span></h2>
          <ul>
            <li v-for="[lv, open, ic, t, w, c] in tree" :key="t" :class="'lv' + lv">
              <span class="tog"><svg v-if="open" width="9" height="9"><path d="M.5.500h8v8h-8z" fill="#f3f2ec" stroke="#8195ac" /><path d="M2 4.500h5" stroke="#111" /></svg></span>
              <Ico :n="ic" /><span class="name" :class="c"><span v-fit="w">{{ t }}</span></span>
            </li>
          </ul>
        </nav>
        <div class="splitter"><i></i></div>
        <main class="content">
          <h2><span v-fit="96">File manager</span></h2>
          <div class="scrollrow">
            <div class="inner">
              <div class="title"><span v-fit="37.5">Site:</span><span class="dom" v-fit="182">kursatblog.somee.com</span></div>
              <div class="tools">
                <div v-for="[n, t, w] in tools" :key="n" class="tool"><Ico :n="n" :s="24" /><span v-fit="w">{{ t }}</span></div>
                <div class="status">
                  <div><span v-fit="106"><em>Action:</em> Launched...</span></div>
                  <div><span v-fit="185"><em>Dir(s):</em> 0 | <em>File(s):</em> 1 | <em>Total:</em> 8 KB</span></div>
                  <div><span v-fit="74"><em>Current path:</em></span></div>
                </div>
              </div>
              <div class="tri down"></div>
              <div class="files">
                <div class="row head">
                  <div class="c0"><i class="box"></i></div><div class="c1"></div><div class="c2"></div>
                  <div class="c3"><a v-fit="51">File name</a></div><div class="c4"></div>
                  <div class="c5"><a v-fit="22.5">Size</a></div><div class="c6"><a v-fit="72">Last modified</a></div>
                </div>
                <div class="row">
                  <div class="c0"><i class="box"></i></div><div class="c1"><Ico n="rename" /></div><div class="c2"><Ico n="doc" /></div>
                  <div class="c3"><span v-fit="60">default.asp</span></div><div class="c4"><Ico n="download" /></div>
                  <div class="c5"><span v-fit="26">8 KB</span></div><div class="c6"><span v-fit="120">23.02.2017 13:07:48</span></div>
                  <div class="edit"><Ico n="etext" /><span v-fit="46">Edit text</span></div>
                  <div class="edit html"><Ico n="ehtml" /><span v-fit="55">Edit HTML</span></div>
                </div>
              </div>
              <div class="tri upw"></div>
            </div>
            <div class="scrollbar"><i class="up"></i><div class="thumb"></div><i class="dn"></i></div>
          </div>
        </main>
      </div>
      <footer>
        <div class="bubble"><span v-fit="199">vj4200.mgmt.somee.com bekleniyor...</span></div>
        <span class="copy" v-fit="249">© Copyright 2017 Doka management panel</span>
      </footer>
    </div>

    <svg class="marks" width="1920" height="1080">
      <rect x="228.500" y="471.500" width="104" height="26" fill="none" stroke="#ed1c24" stroke-width="5" />
      <path d="M328.500 488.500 571.500 306.500" stroke="#ed1c24" stroke-width="5" stroke-linecap="round" />
    </svg>
    <div class="note"><p><span v-fit="201">Buraya asıl site</span></p><p><span v-fit="291">dosyalarını zipleyerek</span></p><p><span v-fit="154">koyacaksın.</span></p></div>
  </div>
</template>

<style>
html, body { margin: 0; background: #000; overflow: hidden; }
</style>

<style scoped>
* { box-sizing: border-box; }
h2, p, ul { margin: 0; padding: 0; font-weight: 400; list-style: none; }
span, strong, a { white-space: nowrap; }
.screen { position: relative; display: flex; width: 1920px; height: 1080px; overflow: hidden; background: #000; font-family: "DejaVu Sans", Verdana, sans-serif; font-size: 11px; }

.taskbar { width: 127px; height: 1080px; display: flex; flex-direction: column; color: #fff; font: 12px "Open Sans", "Segoe UI", sans-serif; }
.start { height: 39px; display: flex; align-items: center; justify-content: center; padding-right: 1px; margin-bottom: 1px; }
.cell { height: 48px; display: flex; align-items: center; justify-content: center; flex: none; padding-right: 2px; }
.task { height: 44px; margin: 2px 1px; background: #333; border: 1px solid #6b6b6b; }
.task.active { background: linear-gradient(#5c5c5c, #858585); border-color: #eee; }
.more { margin: 472px 0 0 111px; border: 4px solid transparent; border-left-color: #fff; border-right: 0; width: 4px; height: 8px; }
.tray { display: flex; gap: 10px; padding-left: 6px; margin-top: 13px; height: 16px; align-items: center; }
.lang { display: flex; justify-content: center; padding-right: 3px; margin-top: 12px; height: 17px; line-height: 17px; }
.clock { display: flex; flex-direction: column; align-items: center; padding-right: 3px; margin-top: 10px; line-height: 17.200px; }

.browser { width: 1793px; display: flex; flex-direction: column; }
.tabs { position: relative; height: 29px; display: flex; flex: none; font: 12px "Open Sans", "Segoe UI", sans-serif; color: #c4c4c4; }
.tabshape { position: absolute; left: 0; top: 0; }
.tab { position: relative; display: flex; align-items: center; height: 29px; padding-top: 1px; }
.tab span { flex: none; }
.tab i { font-style: normal; font-size: 12px; color: #999; font-family: "DejaVu Sans", sans-serif; margin-left: auto; width: 11px; line-height: 16px; }
.t1 { margin-left: 22px; width: 173px; gap: 6px; }
.t2 { margin-left: 20px; width: 173px; gap: 6px; }
.t3 { margin-left: 20px; width: 173px; gap: 6px; }
.snd { margin-left: 6px; }
.t2 i { margin-left: 0; margin-right: -8px; }
.fade { -webkit-mask-image: linear-gradient(90deg, #000 80%, rgba(0, 0, 0, .2)); mask-image: linear-gradient(90deg, #000 80%, rgba(0, 0, 0, .2)); }
.profile { position: relative; margin-left: 1061px; width: 48px; height: 18px; border: 1px solid #444; border-top: 0; border-radius: 0 0 4px 4px; display: flex; justify-content: center; font-size: 11px; line-height: 17px; font-weight: 700; color: #f0f0f0; }
.winbtns { position: relative; display: flex; margin-left: 6px; width: 93px; height: 18px; border: 1px solid #333; border-top: 0; border-radius: 0 0 3px 3px; }
.winbtns b { width: 25px; display: flex; align-items: center; justify-content: center; border-right: 1px solid #333; }
.winbtns b.wide { flex: 1; border: 0; }

.toolbar { height: 31px; flex: none; display: flex; align-items: center; padding: 5px 11px 0; gap: 14px; }
.url { display: flex; align-items: center; width: 1507px; height: 26px; margin-left: -3px; padding: 0 7px 0 6px; background: #fff; border-radius: 2px; font: 13.500px "Open Sans", "Segoe UI", sans-serif; }
.host { margin-left: 7px; color: #111; }
.path { color: #808080; }
.urlicons { display: flex; align-items: center; gap: 8px; margin-left: auto; }
.exts { display: flex; align-items: center; gap: 16px; margin-left: -3px; }
.bookmarks { height: 27px; flex: none; display: flex; align-items: center; padding: 2px 0 0 11px; color: #b4b4b4; font: 12px "Open Sans", "Segoe UI", sans-serif; }
.bm { display: flex; align-items: center; flex: none; }
.bmi { flex: none; }
.lbl { line-height: 16px; }
.chev { font-size: 16px; line-height: 18px; margin-top: -4px; }

.site { height: 32px; flex: none; display: flex; align-items: center; background: #005eb8; border-top: 2px solid #1400c8; border-bottom: 1px solid #fff; box-shadow: inset 0 1px #9fa8c8; color: #fff; font-weight: 700; font-size: 11px; padding: 0 4px 0 14px; font-family: "DejaVu Sans Condensed", "DejaVu Sans", sans-serif; font-stretch: condensed; }
.site a { display: flex; align-items: center; gap: 4px; }
.site a span { font-size: 10.500px; }
.site .brand { font-size: 14.500px; font-family: "Noto Sans", "Open Sans", sans-serif; }
.site .l1 { margin-left: 13px; }
.site .l2 { margin-left: 12px; }
.site .l3 { margin-left: 14px; }
.site .l4 { margin-left: 13px; }
.field { width: 125px; height: 15px; margin-left: 12px; background: #fff; border: 1px solid #9a9a9a; }
.site .l5 { margin-left: 2px; gap: 2px; }
.site .out { margin: 2px 0 0 auto; }
.strip { height: 9px; flex: none; background: #003482; border-bottom: 1px solid #fff; }

.panes { display: flex; height: 932px; flex: none; background: #fff; border-bottom: 1px solid #a9aeb4; }
h2 { height: 24px; line-height: 25px; background: #384964; color: #fff; font-size: 16px; padding-left: 15px; font-family: "Noto Sans", "Open Sans", sans-serif; }
.menu { width: 250px; background: #f9f9f9; }
.menu ul { padding-top: 3px; }
.menu li { display: flex; align-items: center; height: 20px; padding-left: 9px; color: #1a3bc4; }
.menu .lv1 { padding-left: 29px; }
.menu .lv2 { padding-left: 49px; }
.menu .lv3 { padding-left: 69px; }
.menu .lv4 { padding-left: 89px; }
.tog { width: 14px; height: 9px; flex: none; }
.tog svg { display: block; }
.name { height: 20px; line-height: 21px; padding: 0 3px; }
.name > span { padding-top: 1px; }
.menu .seen { color: #800080; }
.menu .current { color: #ff6a1c; background: #dcdce9; }
.splitter { width: 4px; background: #8a979f; display: flex; align-items: flex-start; }
.splitter i { width: 4px; height: 35px; margin-top: 448px; background: repeating-linear-gradient(#41705f 0 1px, #c5d2cd 1px 2px); opacity: .7; }
.content { flex: 1; display: flex; flex-direction: column; }
.scrollrow { flex: 1; display: flex; }
.inner { width: 1506px; margin-right: auto; padding-left: 16px; display: flex; flex-direction: column; }
.title { display: flex; gap: 6px; margin: 6px 0 0 2px; height: 25px; line-height: 25px; font-size: 17px; color: #111; font-family: "Noto Sans", "Open Sans", sans-serif; }
.dom { color: #0c0c66; }
.tools { display: flex; height: 45px; padding: 12px 0 0; }
.tool { width: 40.400px; flex: none; display: flex; flex-direction: column; align-items: center; height: 36px; font-size: 7.500px; line-height: 13px; color: #555; }
.status { margin: -1px 0 0 29px; line-height: 13px; color: #111; font-family: "DejaVu Sans Condensed", "DejaVu Sans", sans-serif; font-stretch: condensed; }
.tri { align-self: flex-end; width: 9px; height: 5px; border: 4.500px solid transparent; }
.tri.down { border-top: 5px solid #0a60cc; border-bottom: 0; }
.tri.upw { border-bottom: 5px solid #0a60cc; border-top: 0; margin-top: 6px; }
.files { margin-top: 6px; width: 1490px; height: 52px; border: 1px solid #00509f; color: #111; font-family: "DejaVu Sans Condensed", "DejaVu Sans", sans-serif; font-stretch: condensed; }
.row { display: flex; align-items: center; height: 26px; }
.row.head { height: 24px; background: #eff0f6; border-bottom: 1px solid #00509f; }
.head a { color: #1209e0; text-decoration: underline; }
.head > div { padding-top: 1px; }
.c0 { width: 36px; padding-left: 6px; }
.c1 { width: 30px; }
.c2 { width: 20px; }
.c3 { width: 786px; }
.c4 { width: 30px; padding-left: 0; }
.c5 { width: 131px; }
.c6 { width: 297px; }
.edit { display: flex; align-items: center; gap: 3px; color: #2d2db0; margin-top: -2px; }
.edit span { color: #38309c; }
.edit.html { margin-left: 13px; gap: 4px; }
.box { display: block; width: 12px; height: 12px; border: 1px solid #a8a8a8; border-radius: 3px; background: linear-gradient(#eee, #dcdcdc); box-shadow: 0 1px 1px #ddd; }
.scrollbar { width: 17px; background: #f1f1f1; display: flex; flex-direction: column; align-items: center; }
.scrollbar i { border: 4px solid transparent; }
.scrollbar .up { border-bottom-color: #a3a3a3; border-top: 0; margin: 7px 0 6px; }
.scrollbar .dn { border-top-color: #505050; border-bottom: 0; margin-top: 16px; }
.thumb { width: 13px; height: 864px; background: #c1c1c1; }

footer { height: 20px; flex: none; display: flex; align-items: center; background: #003482; }
.bubble { width: 770px; height: 20px; background: #001f52; color: #38568a; border-radius: 0 3px 0 0; padding-left: 3px; font: 12px/20px "Open Sans", "Segoe UI", sans-serif; }
.copy { margin-left: auto; margin-right: 15px; color: #cbdcf2; }

.marks { position: absolute; left: 0; top: 0; pointer-events: none; }
.note { position: absolute; left: 617px; top: 337px; color: #ed1c24; font: 29px/40px Lato, Calibri, sans-serif; }
.note p { height: 40px; }
.taskbar span, .tool span, .title span, .bubble span, h2 span, .note span, .status span, .name > span { display: inline-block; }
</style>
